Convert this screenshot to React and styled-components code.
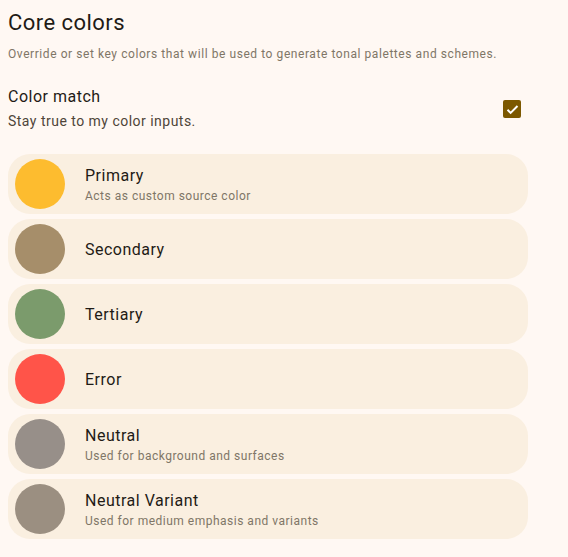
import styled, { createGlobalStyle } from 'styled-components';

const GlobalStyle = createGlobalStyle`
  html, body {
    margin: 0;
    background: #fff8f3;
  }
  body {
    font-family: Roboto, 'Liberation Sans', sans-serif;
    color: #1f1b16;
  }
`;

const Page = styled.div`
  width: 568px;
  height: 557px;
  padding: 9px 40px 0 8px;
  box-sizing: border-box;
  background: #fff8f3;
`;

const Title = styled.h2`
  margin: 0;
  font-size: 22px;
  font-weight: 400;
  line-height: 28px;
  letter-spacing: 0.45px;
  color: #1f1b16;
`;

const Caption = styled.p`
  margin: 9px 0 0;
  font-size: 12px;
  line-height: 16px;
  letter-spacing: 0.57px;
  color: #7f7667;
`;

const MatchRow = styled.div`
  display: flex;
  align-items: center;
  justify-content: space-between;
  margin-top: 23px;
  padding-right: 7px;
`;

const MatchText = styled.div`
  display: flex;
  flex-direction: column;
`;

const MatchLabel = styled.span`
  font-size: 16px;
  line-height: 24px;
  letter-spacing: 0.5px;
  color: #1f1b16;
`;

const MatchHint = styled.span`
  font-size: 14px;
  line-height: 24px;
  letter-spacing: 0.48px;
  color: #4f4539;
`;

const Checkbox = styled.span`
  width: 18px;
  height: 18px;
  border-radius: 2px;
  background: #7c5800;
  display: flex;
  align-items: center;
  justify-content: center;
`;

const List = styled.div`
  display: flex;
  flex-direction: column;
  gap: 5px;
  margin-top: 21px;
`;

const Card = styled.div`
  display: flex;
  align-items: center;
  height: 60px;
  padding: 0 7px;
  border-radius: 22px;
  background: #faefe0;
`;

const Swatch = styled.span`
  flex: none;
  width: 50px;
  height: 50px;
  border-radius: 50%;
  background: ${p => p.$color};
`;

const CardText = styled.div`
  display: flex;
  flex-direction: column;
  margin-left: 20px;
  padding-top: 2px;
`;

const CardName = styled.span`
  font-size: 16px;
  line-height: 22px;
  letter-spacing: 0.5px;
  color: #1f1b16;
`;

const CardNote = styled.span`
  font-size: 12px;
  line-height: 18px;
  letter-spacing: 0.5px;
  color: #7f7667;
`;

const colors = [
  { name: 'Primary', note: 'Acts as custom source color', color: '#fdbc2f' },
  { name: 'Secondary', color: '#a68e6a' },
  { name: 'Tertiary', color: '#7b9b6c' },
  { name: 'Error', color: '#ff5449' },
  { name: 'Neutral', note: 'Used for background and surfaces', color: '#978f89' },
  { name: 'Neutral Variant', note: 'Used for medium emphasis and variants', color: '#9b8f81' },
];

export default function App() {
  return (
    <>
      <GlobalStyle />
      <Page>
        <Title>Core colors</Title>
        <Caption>Override or set key colors that will be used to generate tonal palettes and schemes.</Caption>
        <MatchRow>
          <MatchText>
            <MatchLabel>Color match</MatchLabel>
            <MatchHint>Stay true to my color inputs.</MatchHint>
          </MatchText>
          <Checkbox>
            <svg width="15" height="15" viewBox="0 0 24 24">
              <path d="M4 12.5l5 5L20 6.5" fill="none" stroke="#fff" strokeWidth="3.2" />
            </svg>
          </Checkbox>
        </MatchRow>
        <List>
          {colors.map(c => (
            <Card key={c.name}>
              <Swatch $color={c.color} />
              <CardText>
                <CardName>{c.name}</CardName>
                {c.note && <CardNote>{c.note}</CardNote>}
              </CardText>
            </Card>
          ))}
        </List>
      </Page>
    </>
  );
}
